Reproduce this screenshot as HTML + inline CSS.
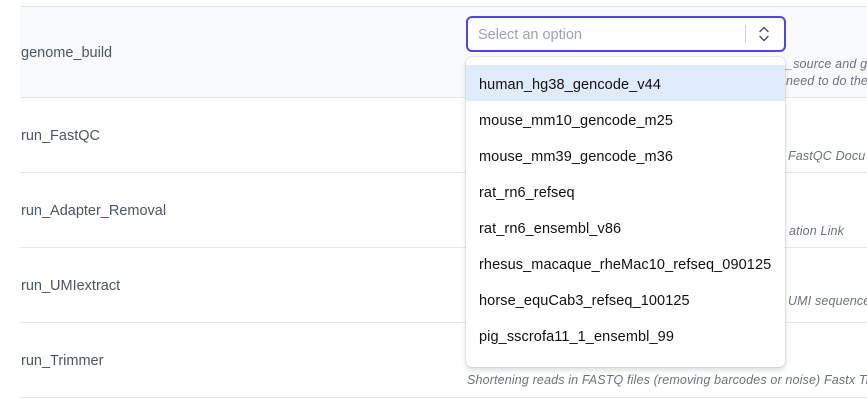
<!DOCTYPE html>
<html><head><style>
*{margin:0;padding:0;box-sizing:border-box}
html,body{width:867px;height:405px;overflow:hidden}
body{background:#fff;font-family:"Liberation Sans",sans-serif;position:relative}
.wrap{position:absolute;left:0;top:0;width:867px;height:405px;overflow:hidden}
.line{position:absolute;left:20px;right:0;height:1px;background:#e5e7eb}
.lab{position:absolute;left:21px;font-size:14.5px;color:#4b5563}
.desc{position:absolute;font-size:12.5px;font-style:italic;color:#6b7280;white-space:nowrap;letter-spacing:.15px}
.sel{position:absolute;left:466px;top:16px;width:320px;height:36px;border:2px solid #4f46e5;border-radius:6px;background:#fff}
.sel span{position:absolute;left:10px;top:9px;font-size:14.5px;color:#9ca3af}
.dd{position:absolute;left:466px;top:57px;width:319px;height:310px;background:#fff;border-radius:6px;box-shadow:0 0 0 1px rgba(0,0,0,.06),0 3px 6px rgba(0,0,0,.15)}
.opt{position:absolute;left:0;right:0;height:36px;padding-left:13px;padding-top:2px;line-height:36px;font-size:14.5px;color:#111;letter-spacing:.1px}
</style></head><body><div class="wrap">
<div class="line" style="top:6px"></div>
<div style="position:absolute;left:20px;right:0;top:7px;height:90px;background:#f9fafb"></div>
<div class="line" style="top:97px"></div>
<div class="line" style="top:172px"></div>
<div class="line" style="top:247px"></div>
<div class="line" style="top:322px"></div>
<div class="line" style="top:397px"></div>
<div class="lab" style="top:45px">genome_build</div>
<div class="lab" style="top:128px">run_FastQC</div>
<div class="lab" style="top:203px">run_Adapter_Removal</div>
<div class="lab" style="top:278px">run_UMIextract</div>
<div class="lab" style="top:353px">run_Trimmer</div>
<div class="desc" style="left:786px;top:57px">_source and gt</div>
<div class="desc" style="left:786px;top:74px">need to do the</div>
<div class="desc" style="left:788px;top:149px">FastQC Docu</div>
<div class="desc" style="left:789px;top:224px">ation Link</div>
<div class="desc" style="left:788px;top:294px">UMI sequence</div>
<div class="desc" style="left:467px;top:373px">Shortening reads in FASTQ files (removing barcodes or noise) Fastx Tri</div>
<div class="sel"><span>Select an option</span>
<div style="position:absolute;left:277px;top:7px;width:1px;height:18px;background:#d1d5db"></div>
<svg style="position:absolute;left:290px;top:7px" width="12" height="18" viewBox="0 0 12 18"><path d="M2 6.5L6 2.5L10 6.5M2 11.5L6 15.5L10 11.5" fill="none" stroke="#4b5563" stroke-width="1.5" stroke-linecap="round" stroke-linejoin="round"/></svg>
</div>
<div class="dd">
<div class="opt" style="top:8px;background:#e0ecfb">human_hg38_gencode_v44</div>
<div class="opt" style="top:44px">mouse_mm10_gencode_m25</div>
<div class="opt" style="top:80px">mouse_mm39_gencode_m36</div>
<div class="opt" style="top:116px">rat_rn6_refseq</div>
<div class="opt" style="top:152px">rat_rn6_ensembl_v86</div>
<div class="opt" style="top:188px">rhesus_macaque_rheMac10_refseq_090125</div>
<div class="opt" style="top:224px">horse_equCab3_refseq_100125</div>
<div class="opt" style="top:260px">pig_sscrofa11_1_ensembl_99</div>
</div>
</div></body></html>
